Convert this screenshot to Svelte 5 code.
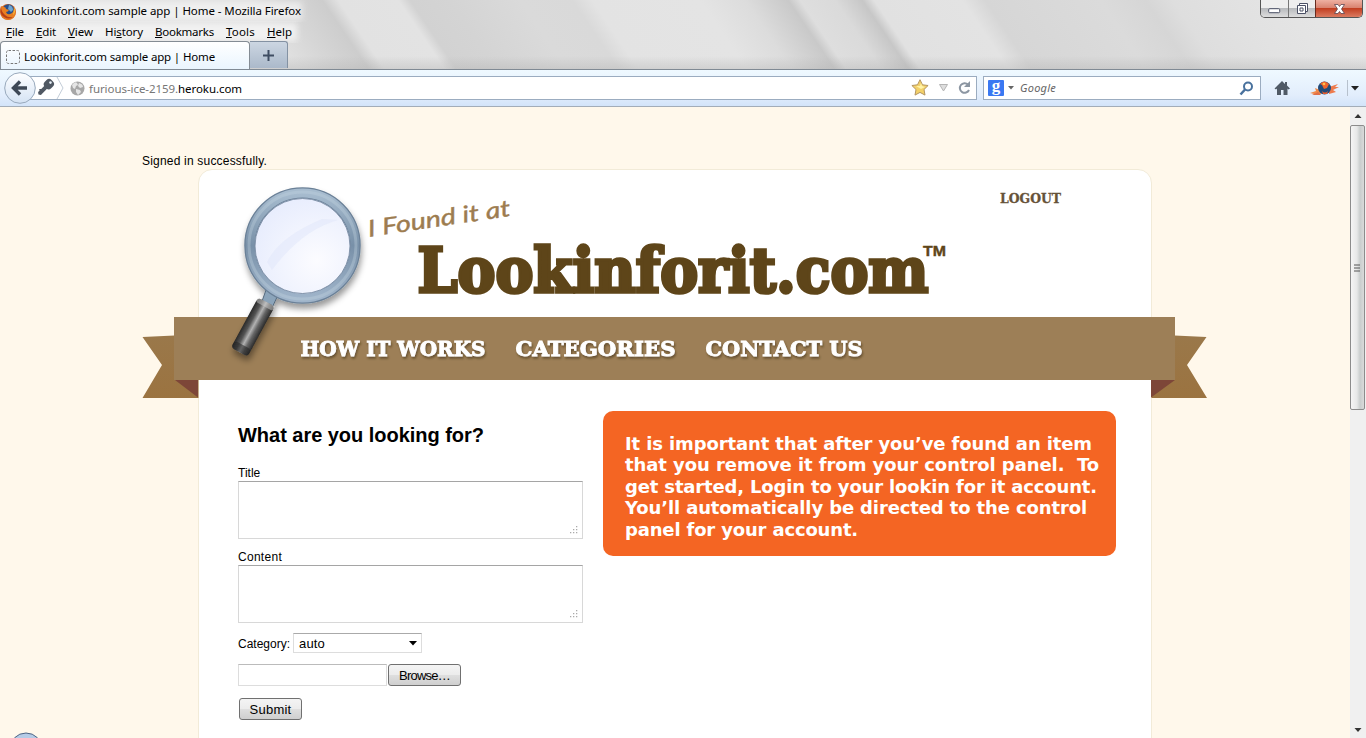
<script>
  const menus = [
    { key: 'F', rest: 'ile', w: 18 },
    { key: 'E', rest: 'dit', w: 20 },
    { key: 'V', rest: 'iew', w: 25 },
    { pre: 'Hi', key: 's', rest: 'tory', w: 38 },
    { key: 'B', rest: 'ookmarks', w: 59 },
    { key: 'T', rest: 'ools', w: 29 },
    { key: 'H', rest: 'elp', w: 25 }
  ];

  const notes = [
    { text: 'It is important that after you’ve found an item', w: 467 },
    { text: 'that you remove it from your control panel.  To', w: 474 },
    { text: 'get started, Login to your lookin for it account.', w: 472 },
    { text: 'You’ll automatically be directed to the control', w: 462 },
    { text: 'panel for your account.', w: 233 }
  ];

  const streaks = [
    [0, '#e4e4e4'], [250, '#e0e0e0'], [285, '#d6d6d6'], [322, '#cdcdcd'], [338, '#e2e2e2'],
    [398, '#e3e3e3'], [410, '#d2d2d2'], [450, '#d4d4d4'], [520, '#dadada'], [572, '#d9d9d9'],
    [592, '#e3e3e3'], [700, '#e4e4e4'], [745, '#dcdcdc'], [788, '#c9c9c9'], [800, '#dedede'],
    [835, '#dadada'], [862, '#c7c7c7'], [874, '#e1e1e1'], [962, '#e3e3e3'], [985, '#d6d6d6'],
    [1100, '#dbdbdb'], [1145, '#d6d6d6'], [1172, '#dedede'], [1240, '#e2e2e2'], [1366, '#e8e8e8']
  ];

  // Tracks a label so that it spans the given width.
  function fit(node, width) {
    const natural = node.getBoundingClientRect().width;
    node.style.letterSpacing = (width - natural) / node.textContent.length + 'px';
  }
</script>

{#snippet grip()}
  <svg class="grip" width="9" height="9" viewBox="0 0 9 9" fill="#aaa">
    <path d="M7 0h1.3v1.3H7zM7 3h1.3v1.3H7zM7 6h1.3v1.3H7zM4 3h1.3v1.3H4zM4 6h1.3v1.3H4zM1 6h1.3v1.3H1z" />
  </svg>
{/snippet}

<div class="window">
  <div class="frame">
    <svg class="glass" width="1366" height="70">
      <defs>
        <linearGradient id="streak" gradientUnits="userSpaceOnUse" x1="0" y1="0" x2="1366" y2="0">
          {#each streaks as [x, c]}<stop offset={x / 1366} stop-color={c} />{/each}
        </linearGradient>
        <linearGradient id="shade" x1="0" y1="0" x2="0" y2="1">
          <stop offset=".8" stop-color="#aaa" stop-opacity="0" /><stop offset="1" stop-color="#aaa" stop-opacity=".35" />
        </linearGradient>
        <filter id="soft"><feGaussianBlur stdDeviation="3" /></filter>
      </defs>
      <rect x="-80" width="1500" height="70" fill="url(#streak)" transform="skewX(34)" />
      <rect x="-10" y="2" width="312" height="18" fill="#f4f4f4" filter="url(#soft)" opacity=".75" />
      <rect x="-10" y="23" width="307" height="18" fill="#f4f4f4" filter="url(#soft)" opacity=".85" />
      <rect width="1366" height="70" fill="url(#shade)" />
    </svg>

    <div class="titlebar">
      <svg class="fox" width="16" height="20" viewBox="0 0 16 20">
        <circle cx="8" cy="11" r="8" fill="#d9661c" />
        <circle cx="8.4" cy="8.8" r="5.6" fill="#28508c" />
        <path d="M9 4q4 1 4 5l-2 2-3-3z" fill="#6ea4cf" />
        <path d="M1 5q1 1 3 1 2 0 2 2l3 1q-1 2-3 2 1 3 4 2 4-1 4-6 3 5 0 9-4 4-9 2-6-3-4-13z" fill="#e87f22" />
        <path d="M1 5q-2 8 3 11 5 3 9 0-5 1-8-2-4-3-4-9z" fill="#b73e18" />
        <path d="M14 6q2 5-1 8 1-3 1-8z" fill="#f8c944" />
      </svg>
      <span class="title" use:fit={280}>Lookinforit.com sample app | Home - Mozilla Firefox</span>
      <div class="controls">
        <button class="min" aria-label="Minimize"><svg width="13" height="6"><rect x=".7" y=".7" width="11" height="4" rx="1" fill="#fff" stroke="#4b5065" /></svg></button>
        <button class="max" aria-label="Restore"><svg width="13" height="13" viewBox="0 0 13 13" fill="#fff" stroke="#4b5065"><path d="M3.5 1.5h8v8h-8z" /><path d="M1.5 3.5h8v8h-8z" /><path d="M4 6h3v3H4z" /></svg></button>
        <button class="close" aria-label="Close"><svg width="13" height="12" viewBox="0 0 13 12"><path d="M1.500 1.500h3.500l1.500 2 1.500-2h3.500L8.500 6l3 4.500H8l-1.500-2-1.500 2H1.500l3-4.500z" fill="#fff" stroke="#5d4550" stroke-width=".8" /></svg></button>
      </div>
    </div>

    <div class="menubar">
      {#each menus as m}<span use:fit={m.w}>{m.pre ?? ''}<u>{m.key}</u>{m.rest}</span>{/each}
    </div>

    <div class="tabs">
      <div class="tab">
        <svg width="14" height="14"><rect x=".5" y=".5" width="13" height="13" rx="2" fill="none" stroke="#777" stroke-dasharray="2.5 1.5" /></svg>
        <span use:fit={191}>Lookinforit.com sample app | Home</span>
      </div>
      <div class="newtab"><svg width="11" height="11"><path d="M5.5 0v11M0 5.5h11" stroke="#3f4d62" stroke-width="2" /></svg></div>
    </div>
  </div>

  <div class="toolbar">
    <svg class="back" width="66" height="34" viewBox="0 0 66 34">
      <defs><linearGradient id="btn" x1="0" y1="0" x2="0" y2="1"><stop stop-color="#fff" /><stop offset="1" stop-color="#d5e3f4" /></linearGradient></defs>
      <path d="M20 5.500H66v23H20z" fill="#fff" />
      <path d="M20 5.500H66M20 28.500H66" stroke="#9bacc0" />
      <path d="M57 6l6 11-6 11" fill="none" stroke="#c3cdd8" />
      <circle cx="20" cy="17" r="15.3" fill="url(#btn)" stroke="#98a9bc" />
      <path d="M27 17H14M20 10.500l-6.500 6.500 6.500 6.500" fill="none" stroke="#3e4856" stroke-width="3.400" />
      <g transform="rotate(45 48 14)" fill="#505862"><rect x="43.500" y="8" width="9" height="9.500" rx="3.500" /><path d="M46 16h4v10l-2 1.500-2-1.500v-2l-1.500-1 1.500-1.500z" /><circle cx="48" cy="10.500" r="1.300" fill="#e8f0f8" /></g>
    </svg>
    <div class="url">
      <svg width="15" height="15" viewBox="0 0 15 15"><circle cx="7.500" cy="7.500" r="7" fill="#a7a7a7" /><path d="M2 4q3-4 5-2l1 2-2 1-1 3-2-1zM9 2q4 1 4 4l-3 1-2-2zM6 8l4 1 1 2-3 3-2-3z" fill="#e5e5e5" /></svg>
      <span class="address" use:fit={153}>furious-ice-2159.<b>heroku.com</b></span>
      <svg class="actions" width="62" height="20" viewBox="0 0 62 20">
        <path d="M10 1.700l2.500 5.100 5.600.7-4.100 4 1 5.600-5-2.700-5 2.700 1-5.600-4.100-4 5.600-.7z" fill="#f3d169" stroke="#b39562" stroke-linejoin="round" />
        <path d="M6 8h4l1-3 1 3 3 1-4 2z" fill="#fff3a8" />
        <path d="M29.500 6.500h8L33.500 13z" fill="#dedede" stroke="#b5b5b5" />
        <path d="M58 6.500A4.800 4.800 0 1 0 59 12" fill="none" stroke="#8c96a2" stroke-width="2" /><path d="M60 3v6h-6z" fill="#8c96a2" />
      </svg>
    </div>
    <div class="search">
      <div class="g">g</div>
      <svg width="6" height="4"><path d="M0 0h6L3 3.500z" fill="#666" /></svg>
      <span use:fit={36}>Google</span>
      <svg class="lens" width="15" height="15" viewBox="0 0 15 15" fill="none" stroke="#48719d"><circle cx="9" cy="5.500" r="4" stroke-width="2" /><path d="M6 8.500l-4.500 5" stroke-width="2.500" /></svg>
    </div>
    <svg class="home" width="16" height="16" viewBox="0 0 16 16"><path d="M8 1L.5 8.500l1.500 1 1-1V15h4v-5h2.500v5h4V8.500l1 1 1.500-1L13 5.500V2h-2v2z" fill="#505a66" /></svg>
    <svg class="bird" width="32" height="18" viewBox="0 0 32 18">
      <path d="M1 14l6-2-1-3 5 2 3 3-5 2z" fill="#f18a4a" /><path d="M3 16l6-3 3 3z" fill="#e0704a" />
      <path d="M20 8l9-3-3 3 4 0-6 3 3 2-7 2z" fill="#ee7b4d" />
      <circle cx="15.500" cy="9" r="6.500" fill="#234b79" /><path d="M11 5q4-5 9 0l-2 4-3 1-2-4z" fill="#ef642d" /><path d="M13 12q3 3 6 0l-1 3h-4z" fill="#e95c2b" /><circle cx="15" cy="5" r="1.300" fill="#ffc04c" />
    </svg>
    <div class="more"><svg width="8" height="5"><path d="M0 0h8L4 4.500z" fill="#222" /></svg></div>
  </div>

  <div class="viewport">
    <main>
      <p class="notice"><span use:fit={125}>Signed in successfully.</span></p>
      <div class="card">
        <svg class="banner" width="1066" height="230" viewBox="142 170 1066 230">
          <defs>
            <linearGradient id="ring" x1="0" y1="0" x2="0" y2="1"><stop stop-color="#a7bccf" /><stop offset=".5" stop-color="#7890a8" /><stop offset="1" stop-color="#9fb4ca" /></linearGradient>
            <radialGradient id="glass" cx=".65" cy=".65" r=".7"><stop stop-color="#fcfcff" /><stop offset="1" stop-color="#e8edfd" /></radialGradient>
            <linearGradient id="handle"><stop stop-color="#292929" /><stop offset=".28" stop-color="#555" /><stop offset=".5" stop-color="#b2b2b2" /><stop offset=".7" stop-color="#666" /><stop offset="1" stop-color="#292929" /></linearGradient>
            <linearGradient id="tail" x1="0" y1="0" x2="0" y2="1"><stop stop-color="#9a784a" /><stop offset="1" stop-color="#9b7340" /></linearGradient>
            <filter id="drop" x="-20%" y="-20%" width="150%" height="150%"><feDropShadow dx="1" dy="5" stdDeviation="3" flood-color="#000" flood-opacity=".4" /></filter>
            <filter id="textdrop" x="-10%" y="-20%" width="120%" height="160%"><feDropShadow dx="1" dy="2" stdDeviation="1" flood-color="#3c2a10" flood-opacity=".6" /></filter>
          </defs>
          <path d="M142.500 337l32-1.500V380l24 0v18h-56l19.500-33z" fill="url(#tail)" />
          <path d="M1206.500 337l-32-1.500V380h-23v18h55.500L1187 365z" fill="url(#tail)" />
          <path d="M175 380h23v17.500z" fill="#7d4638" /><path d="M1175 380h-24v17.500z" fill="#7d4638" />
          <rect x="174" y="317" width="1001" height="63" fill="#9d7f57" />
          <g filter="url(#drop)">
            <path d="M266 290l12 5-7 15-10-6z" fill="#8ba4ba" stroke="#55697c" />
            <g transform="translate(266.500 302) rotate(28.500)"><rect x="-9.500" y="0" width="19" height="57" rx="4" fill="url(#handle)" /><rect x="-9.500" width="19" height="5" rx="2" fill="#c9c9c9" opacity=".5" /><rect x="-9.500" y="49" width="19" height="8" rx="4" fill="#222" opacity=".55" /></g>
            <circle cx="302.500" cy="245.500" r="52.500" fill="none" stroke="#6a8097" stroke-width="11.500" />
            <circle cx="302.500" cy="245.500" r="52.500" fill="none" stroke="url(#ring)" stroke-width="9" />
            <circle cx="302.500" cy="245.500" r="53.500" fill="none" stroke="#c3d3e0" stroke-width="3" opacity=".35" />
          </g>
          <circle cx="302.500" cy="246" r="47.500" fill="url(#glass)" stroke="#8395ac" />
          <path d="M267 262q12-25 55-43l16 1q-36 10-66 50z" fill="#e0e5f9" opacity=".5" />
          <text class="script" transform="translate(369 237) rotate(-8.500)" textLength="144" lengthAdjust="spacingAndGlyphs">I Found it at</text>
          <text class="logo" x="417.500" y="292" textLength="511" lengthAdjust="spacingAndGlyphs">Lookinforit.com</text>
          <text class="tm" x="923" y="256" textLength="23" lengthAdjust="spacingAndGlyphs">TM</text>
          <text class="logout" x="1000" y="203" textLength="61" lengthAdjust="spacingAndGlyphs">LOGOUT</text>
          <g class="nav" filter="url(#textdrop)">
            <text x="300.500" y="356" textLength="185" lengthAdjust="spacingAndGlyphs">HOW IT WORKS</text>
            <text x="515.500" y="356" textLength="160" lengthAdjust="spacingAndGlyphs">CATEGORIES</text>
            <text x="705.500" y="356" textLength="157" lengthAdjust="spacingAndGlyphs">CONTACT US</text>
          </g>
        </svg>

        <div class="columns">
          <form>
            <h1><span use:fit={246}>What are you looking for?</span></h1>
            <label for="t">Title</label>
            <div class="area"><textarea id="t"></textarea>{@render grip()}</div>
            <label for="c" class="second"><span use:fit={44}>Content</span></label>
            <div class="area"><textarea id="c"></textarea>{@render grip()}</div>
            <div class="category">
              <span class="name" use:fit={52}>Category:</span>
              <div class="select"><span use:fit={26}>auto</span><svg width="8" height="5"><path d="M0 0h8L4 4.500z" fill="#000" /></svg></div>
            </div>
            <div class="file"><div class="path"></div><button type="button"><span use:fit={51}>Browse…</span></button></div>
            <button type="button" class="submit"><span use:fit={42}>Submit</span></button>
          </form>
          <aside>
            {#each notes as n}<div><span use:fit={n.w}>{n.text}</span></div>{/each}
          </aside>
        </div>
      </div>
      <svg class="orb" width="32" height="6" viewBox="0 0 32 6"><circle cx="16" cy="17" r="16" fill="#b5cbe6" stroke="#4d6484" /></svg>
    </main>
    <div class="scroll">
      <svg class="up" width="16" height="18"><path d="M4.500 11L8 7l3.500 4z" fill="#333" /></svg>
      <div class="thumb"><svg width="8" height="8"><path d="M0 1h6M0 4h6M0 7h6" stroke="#555" /></svg></div>
      <svg class="down" width="16" height="16"><path d="M4.500 6L8 10l3.500-4z" fill="#333" /></svg>
    </div>
  </div>
</div>

<style>
  :global(body) { margin: 0; overflow: hidden; }
  .window { width: 1366px; height: 738px; display: flex; flex-direction: column; overflow: hidden; font: 12px "Liberation Sans", Arial, sans-serif; color: #000; }
  .window * { box-sizing: border-box; }
  span { display: inline-block; white-space: pre; flex: none; }
  svg { display: block; flex: none; }
  .frame { position: relative; height: 70px; flex: none; display: flex; flex-direction: column; font-family: "Noto Sans", sans-serif; font-size: 11.5px; border-bottom: 1px solid #808a94; }
  .glass { position: absolute; left: 0; top: 0; height: 69px; }
  .titlebar, .menubar, .tabs { position: relative; display: flex; }
  .titlebar { height: 22px; align-items: center; }
  .fox { margin-right: 5px; }
  .controls { margin: 0 3px 0 auto; height: 18px; align-self: flex-start; display: flex; border: 1px solid #555; border-top: 0; border-radius: 0 0 5px 5px; overflow: hidden; width: 103px; }
  .controls button { border: 0; padding: 0; height: 17px; display: flex; align-items: center; justify-content: center; background: linear-gradient(#eee 0 45%, #b8babd 50%, #ddd); }
  .controls .min { width: 28px; border-right: 1px solid #777; padding-top: 4px; }
  .controls .max { width: 27px; border-right: 1px solid #672c20; }
  .controls .close { width: 46px; background: linear-gradient(#eeb0a2, #d98370 45%, #c23f22 50%, #db7b61); }
  .menubar { height: 20px; align-items: center; padding-left: 6px; gap: 12px; }
  u { text-underline-offset: 1px; }
  .tabs { height: 28px; align-items: stretch; }
  .tab { width: 250px; display: flex; align-items: center; gap: 4px; padding: 2px 0 0 5px; border: 1px solid #848c94; border-bottom: 0; border-radius: 4px 4px 0 0; background: linear-gradient(#fff, #eaf5fe); }
  .newtab { width: 38px; height: 27px; display: flex; align-items: center; justify-content: center; background: linear-gradient(#ccd6e2, #abb9ca); border: 1px solid #8492a3; border-left: 0; border-bottom: 0; border-radius: 0 3px 0 0; }
  .toolbar { height: 37px; flex: none; display: flex; align-items: center; background: linear-gradient(#eff9ff, #e2edfc 70%, #d3e4f9); border-bottom: 1px solid #a3adb8; font-family: "Noto Sans", sans-serif; font-size: 11.5px; }
  .url, .search { height: 24px; display: flex; align-items: center; background: #fff; border: 1px solid #9bacc0; }
  .url { width: 911px; border-left: 0; padding-left: 4px; gap: 4px; }
  .address { color: #777; }
  .address b { color: #000; font-weight: 400; }
  .actions { margin-left: auto; margin-right: 4px; }
  .search { width: 278px; margin-left: 6px; padding: 0 6px 0 4px; }
  .search span { margin-left: 6px; color: #666; font-style: italic; font-size: 11px; margin-top: -2px; }
  .g { width: 16px; height: 16px; margin-right: 4px; border-radius: 1px; background: #3a78f2; color: #fff; font: 700 17px/11px "Liberation Serif", serif; text-align: center; }
  .lens { margin-left: auto; }
  .home { margin-left: 13px; }
  .bird { margin-left: 19px; }
  .more { height: 16px; margin-left: 6px; padding: 6px 0 0 3px; border-left: 1px solid #b7c1cd; }
  .viewport { flex: 1; display: flex; min-height: 0; }
  main { position: relative; width: 1350px; background: #fff8eb; padding: 45px 0 0; overflow: hidden; }
  .notice { margin: 0 0 0 142px; height: 17px; line-height: 19px; }
  .card { width: 954px; height: 700px; margin-left: 197.500px; background: #fff; border: 1px solid #f2ebd8; border-radius: 14px; }
  .banner { margin-left: -56.500px; overflow: visible; }
  .script { font: italic 23px Lato, sans-serif; fill: #9d7c50; stroke: #9d7c50; stroke-width: .4px; }
  .logo { font: 700 61px "DejaVu Serif", serif; fill: #5e4519; stroke: #5e4519; stroke-width: 3.500px; }
  .tm { font: 700 15.5px "Liberation Sans", sans-serif; fill: #5e4519; stroke: #5e4519; stroke-width: .4px; }
  .logout { font: 700 13px "DejaVu Serif", serif; fill: #665238; stroke: #665238; stroke-width: .3px; }
  .nav text { font: 700 21px "DejaVu Serif", serif; fill: #fff; stroke: #fff; stroke-width: .9px; }
  .columns { display: flex; gap: 20px; align-items: flex-start; padding-left: 39.500px; }
  form { width: 345px; padding-top: 23px; }
  h1 { margin: 0 0 18px; font-size: 20px; line-height: 24px; height: 24px; }
  label { display: block; height: 16px; line-height: 16px; }
  .second { margin-top: 10px; }
  .area { position: relative; height: 58px; }
  textarea { display: block; width: 345px; height: 58px; resize: none; outline: 0; border: 1px solid #d8d8d8; border-top-color: #a5a5a5; background: #fff; }
  .grip { position: absolute; right: 5px; bottom: 4px; }
  .category { display: flex; align-items: center; gap: 3px; margin-top: 10px; height: 20px; }
  .name { padding-top: 2px; }
  .select { width: 129px; height: 20px; display: flex; align-items: center; justify-content: space-between; padding: 0 4px 0 5px; border: 1px solid #ddd; border-top-color: #aaa; font-size: 13px; }
  .file { display: flex; margin-top: 11px; gap: 1px; }
  .path { width: 149px; height: 22px; border: 1px solid #ddd; border-top-color: #bbb; }
  form button { height: 22px; width: 73px; padding: 0; border: 1px solid #707070; border-radius: 3px; background: linear-gradient(#f4f4f4, #ececec 48%, #dedede 52%, #cfcfcf); font: 13px "Liberation Sans", Arial, sans-serif; color: #000; }
  form .submit { display: block; width: 63px; margin: 12px 0 0 1px; }
  aside { width: 513px; height: 145px; margin-top: 11px; padding: 21.500px 0 0 22px; border-radius: 10px; background: #f46523; color: #fff; font: 700 18px/21.600px "DejaVu Sans", Verdana, sans-serif; }
  aside div { height: 21.600px; }
  .orb { position: absolute; left: 10px; bottom: 0; }
  .scroll { width: 16px; display: flex; flex-direction: column; background: #f0f0f0; }
  .thumb { width: 15px; height: 285px; display: flex; align-items: center; justify-content: center; border: 1px solid #8c8c8c; border-radius: 2px; background: linear-gradient(90deg, #f5f5f5, #e7e8e8 45%, #c9cdcd 70%, #dadada); }
  .down { margin-top: auto; }
</style>
